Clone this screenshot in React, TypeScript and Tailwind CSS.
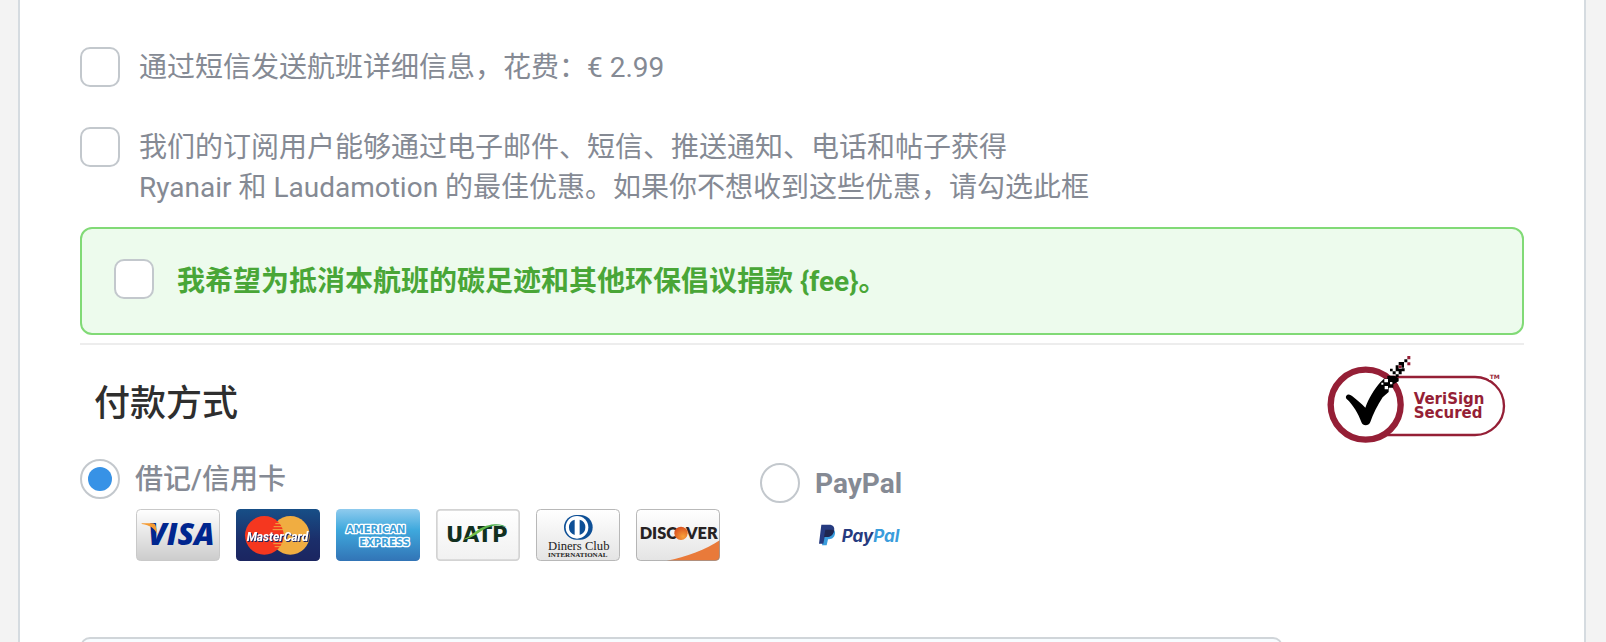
import { useState } from "react";

const checkboxClass =
  "size-10 shrink-0 cursor-pointer appearance-none rounded-[10px] border-2 border-[#c3c8cd] bg-white checked:bg-[#3792e6]";

const radioClass =
  "grid size-10 shrink-0 cursor-pointer appearance-none place-items-center rounded-full border-2 border-[#c3c8cd] bg-white before:size-6 before:rounded-full checked:before:bg-[#3792e6]";

function VisaCard() {
  return (
    <svg viewBox="0 0 252 156" className="h-[52px] w-[84px]" role="img" aria-label="Visa">
      <defs>
        <linearGradient id="visa-bg" x1="0" y1="0" x2="0" y2="1">
          <stop offset="0" stopColor="#ffffff" />
          <stop offset="1" stopColor="#cccccc" />
        </linearGradient>
      </defs>
      <rect x="1.5" y="1.5" width="249" height="153" rx="12" fill="url(#visa-bg)" stroke="#c9c9c9" strokeWidth="3" />
      <text x="36" y="108" fill="#00268f" className="font-['Open_Sans'] text-[91px] font-extrabold italic">
        VISA
      </text>
      <path d="M17 43 H48 C56 43 58 46 60 54 L64 76 C56 58 42 48 17 45 Z" fill="#f59b33" />
    </svg>
  );
}

function MasterCard() {
  return (
    <svg viewBox="0 0 252 156" className="h-[52px] w-[84px]" role="img" aria-label="MasterCard">
      <defs>
        <linearGradient id="mc-bg" x1="0" y1="0" x2="0" y2="1">
          <stop offset="0" stopColor="#174f87" />
          <stop offset="0.6" stopColor="#1b2e6a" />
          <stop offset="1" stopColor="#1b2560" />
        </linearGradient>
      </defs>
      <rect width="252" height="156" rx="13" fill="url(#mc-bg)" />
      <circle cx="163" cy="79" r="58" fill="#f0ad41" />
      <circle cx="85" cy="79" r="58" fill="#f5371f" />
      <path d="M118 44 H140 M113 53 H141 M110 62 H143 M112 104 H140 M116 113 H136" stroke="#f0ad41" strokeWidth="3" />
      <text
        x="32"
        y="95"
        fill="#ffffff"
        className="font-['Roboto'] text-[36px] font-extrabold italic drop-shadow-[3px_3px_0_#1b2560]"
      >
        MasterCard
      </text>
    </svg>
  );
}

function AmexCard() {
  return (
    <svg viewBox="0 0 252 156" className="h-[52px] w-[84px]" role="img" aria-label="American Express">
      <defs>
        <linearGradient id="amex-bg" x1="0" y1="0" x2="0" y2="1">
          <stop offset="0" stopColor="#8fcbee" />
          <stop offset="0.4" stopColor="#3fa9dd" />
          <stop offset="1" stopColor="#3274b6" />
        </linearGradient>
      </defs>
      <rect width="252" height="156" rx="13" fill="url(#amex-bg)" />
      <text
        fill="#3d9fd8"
        stroke="#ffffff"
        strokeWidth="8"
        strokeLinejoin="round"
        style={{ paintOrder: "stroke" }}
        className="font-['DejaVu_Sans'] text-[30px] font-bold"
      >
        <tspan x="30" y="73">
          AMERICAN
        </tspan>
        <tspan x="70" y="111">
          EXPRESS
        </tspan>
      </text>
    </svg>
  );
}

function UatpCard() {
  return (
    <svg viewBox="0 0 252 156" className="h-[52px] w-[84px]" role="img" aria-label="UATP">
      <defs>
        <linearGradient id="uatp-bg" x1="0" y1="0" x2="0" y2="1">
          <stop offset="0" stopColor="#ffffff" />
          <stop offset="1" stopColor="#f1f1f1" />
        </linearGradient>
        <linearGradient id="uatp-swoosh" x1="0" y1="0" x2="1" y2="0">
          <stop offset="0" stopColor="#8ed04b" />
          <stop offset="1" stopColor="#2f9e4a" />
        </linearGradient>
      </defs>
      <rect x="2.5" y="2.5" width="247" height="151" rx="10" fill="url(#uatp-bg)" stroke="#d3d3d3" strokeWidth="5" />
      <text x="30" y="98" fill="#12301f" className="font-['DejaVu_Sans'] text-[64px] font-bold">
        UATP
      </text>
      <path d="M80 92 C112 82 124 50 176 46 C190 45 204 48 212 55 C196 49 180 48 162 53 C132 62 118 86 80 92 Z" fill="url(#uatp-swoosh)" />
    </svg>
  );
}

function DinersCard() {
  return (
    <svg viewBox="0 0 252 156" className="h-[52px] w-[84px]" role="img" aria-label="Diners Club">
      <defs>
        <linearGradient id="light-bg" x1="0" y1="0" x2="0" y2="1">
          <stop offset="0" stopColor="#ffffff" />
          <stop offset="1" stopColor="#e4e4e4" />
        </linearGradient>
      </defs>
      <rect x="1.5" y="1.5" width="249" height="153" rx="12" fill="url(#light-bg)" stroke="#b8b8b8" strokeWidth="3" />
      <path d="M121 18 H133 A37 37 0 0 1 133 92 H121 A37 37 0 0 1 121 18 Z" fill="#0d4f96" />
      <circle cx="123" cy="55" r="34" fill="#ffffff" />
      <path d="M116 32 A24 24 0 0 0 116 78 Z M131 32 A24 24 0 0 1 131 78 Z" fill="#0d4f96" />
      <text fill="#1c1c1c" className="font-['Liberation_Serif']">
        <tspan x="36" y="123" className="text-[38px]">
          Diners Club
        </tspan>
        <tspan x="36" y="143" className="text-[21px] font-bold">
          INTERNATIONAL
        </tspan>
      </text>
    </svg>
  );
}

function DiscoverCard() {
  return (
    <svg viewBox="0 0 252 156" className="h-[52px] w-[84px]" role="img" aria-label="Discover">
      <defs>
        <radialGradient id="discover-dot" cx="0.65" cy="0.75" r="0.75">
          <stop offset="0" stopColor="#f8a13a" />
          <stop offset="1" stopColor="#d9501e" />
        </radialGradient>
      </defs>
      <rect x="1.5" y="1.5" width="249" height="153" rx="12" fill="url(#light-bg)" />
      <path d="M92 155 C150 146 212 120 251 94 V142 Q251 155 238 155 Z" fill="#e97a3a" />
      <rect x="1.5" y="1.5" width="249" height="153" rx="12" fill="none" stroke="#8a8a8a" strokeOpacity="0.6" strokeWidth="3" />
      <text y="91" fill="#262223" className="font-['Lato'] text-[49px] font-extrabold">
        <tspan x="11">DISC</tspan>
        <tspan x="150">VER</tspan>
      </text>
      <circle cx="135" cy="73" r="20" fill="url(#discover-dot)" />
    </svg>
  );
}

function PayPalLogo() {
  return (
    <svg viewBox="1197 250 246 66" className="h-[22px] w-[82px]" role="img" aria-label="PayPal">
      <path d="M1214 264 H1234 C1245 266 1247 274 1244 283 C1241 293 1233 296 1224 296 L1220 314 H1206 Z" fill="#3a9ddc" />
      <path d="M1204 252 H1227 C1240 252 1245 260 1242 271 C1239 284 1230 289 1219 289 H1214 L1210 309 H1197 Z" fill="#263b80" />
      <path d="M1216 267 H1234 C1238 267 1241 268 1242 270 C1239 284 1230 289 1219 289 H1212 Z" fill="#1f264f" />
      <text x="1265" y="305" fill="#263b80" className="font-['Inter'] text-[51px] font-bold italic">
        Pay<tspan fill="#3a9ddc">Pal</tspan>
      </text>
    </svg>
  );
}

function VeriSignLogo() {
  return (
    <svg viewBox="81 48 540 264" className="h-[88px] w-[180px]" role="img" aria-label="VeriSign Secured">
      <path d="M260 111 H525 A87 87 0 0 1 525 285 H260" fill="none" stroke="#951f36" strokeWidth="7" />
      <circle cx="197" cy="194" r="105" fill="#ffffff" stroke="#951f36" strokeWidth="19" />
      <path
        d="M139 167 C144 161 152 164 160 171 C174 183 184 191 196 203 C206 176 222 148 241 127 L252 116 H262 V107 H283 L296 115 V124 L280 133 V143 H266 V156 L248 172 C232 196 219 224 211 246 C206 259 188 259 184 246 C174 220 160 195 140 177 C137 173 137 170 139 167 Z"
        fill="#000000"
      />
      <path
        d="M270 86 h8 v8 h-8 z M278 94 h9 v9 h-9 z M287 76 h9 v10 h-9 z M296 66 h16 v9 h-16 z M287 86 h18 v8 h-18 z M305 85 h9 v9 h-9 z M296 94 h9 v9 h-9 z M313 58 h9 v9 h-9 z M287 103 h9 v8 h-9 z M304 75 h8 v8 h-8 z"
        fill="#000000"
      />
      <path d="M322 48 h9 v10 h-9 z M322 67 h9 v9 h-9 z M296 76 h8 v9 h-8 z" fill="#951f36" />
      <path d="M253 117 h11 v10 h-11 z M254 138 h10 v10 h-10 z M270 126 h7 v7 h-7 z M244 128 h6 v6 h-6 z" fill="#ffffff" />
      <path d="M567 99 H600 V120 H567 Z" fill="#ffffff" />
      <text fill="#951f36" className="font-['DejaVu_Sans'] text-[45px] font-bold">
        <tspan x="341" y="192">
          VeriSign
        </tspan>
        <tspan x="341" y="235">
          Secured
        </tspan>
        <tspan x="569" y="117" className="text-[18px]">
          TM
        </tspan>
      </text>
    </svg>
  );
}

export default function App() {
  const [method, setMethod] = useState("card");

  return (
    <div
      lang="zh-CN"
      className="min-h-screen bg-[#f3f3f3] pr-5 pl-[18px] font-['Roboto','Noto_Sans_CJK_SC',sans-serif] text-[28px] leading-10 text-[#858a94]"
    >
      <main className="min-h-screen border-x-2 border-[#d5dbe0] bg-white px-[60px] pt-[47px] pb-10">
        <div className="flex flex-col gap-10">
          <label className="flex items-start gap-[19px]">
            <input type="checkbox" className={checkboxClass} />
            <span className="-mb-px pt-px">通过短信发送航班详细信息，花费：€ 2.99</span>
          </label>
          <label className="flex items-start gap-[19px]">
            <input type="checkbox" className={checkboxClass} />
            <span className="-mb-px pt-px">
              我们的订阅用户能够通过电子邮件、短信、推送通知、电话和帖子获得
              <br />
              Ryanair 和 Laudamotion 的最佳优惠。如果你不想收到这些优惠，请勾选此框
            </span>
          </label>
        </div>

        <label className="mt-5 flex items-start gap-[23px] rounded-xl border-2 border-[#81da76] bg-[#edfbed] px-8 pt-[30px] pb-7 font-bold text-[#49a637]">
          <input type="checkbox" className={checkboxClass} />
          <span className="leading-[46px]">我希望为抵消本航班的碳足迹和其他环保倡议捐款 {"{fee}"}。</span>
        </label>

        <hr className="mt-2 border-t-2 border-[#ededed]" />

        <div className="flex items-center justify-between pt-[11px] pr-[17px] pl-[14px]">
          <h2 className="pt-2 text-4xl font-medium text-[#2e2e2e]">付款方式</h2>
          <VeriSignLogo />
        </div>

        <div className="mt-[15px] flex items-start gap-10">
          <div>
            <label className="flex items-center gap-[15px] font-medium">
              <input
                type="radio"
                name="method"
                className={radioClass}
                checked={method === "card"}
                onChange={() => setMethod("card")}
              />
              <span className="-mb-px pt-px">借记/信用卡</span>
            </label>
            <div className="mt-[10px] flex gap-4 pl-14">
              <VisaCard />
              <MasterCard />
              <AmexCard />
              <UatpCard />
              <DinersCard />
              <DiscoverCard />
            </div>
          </div>
          <div className="pt-1">
            <label className="flex items-center gap-[15px] font-bold">
              <input
                type="radio"
                name="method"
                className={radioClass}
                checked={method === "paypal"}
                onChange={() => setMethod("paypal")}
              />
              <span className="-mb-px pt-px">PayPal</span>
            </label>
            <div className="mt-[21px] pl-[59px]">
              <PayPalLogo />
            </div>
          </div>
        </div>

        <input
          type="text"
          aria-label="卡号"
          className="mt-[76px] block h-20 w-5/6 rounded-[10px] border-2 border-[#d0d5d9] bg-[#f7fcff] px-5"
        />
      </main>
    </div>
  );
}
